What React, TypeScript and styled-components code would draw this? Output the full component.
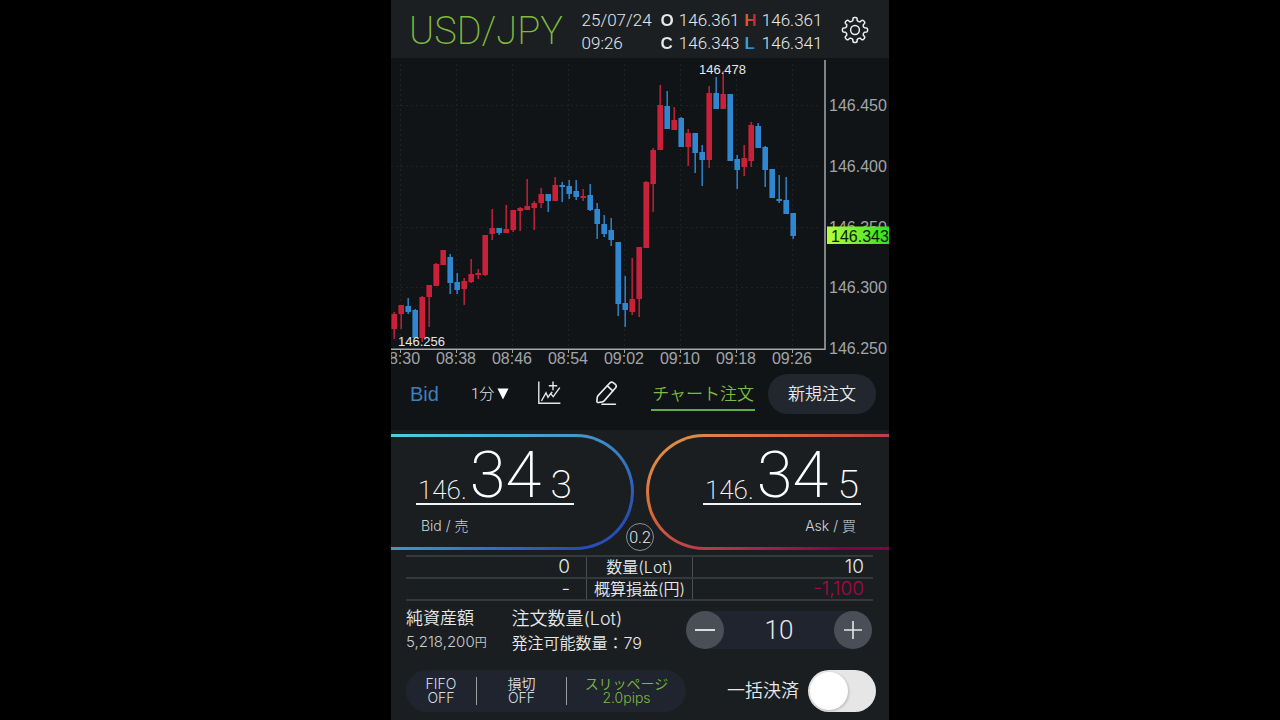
import React, { useState } from 'react';
import styled, { createGlobalStyle } from 'styled-components';

const light = `Roboto, "Noto Sans CJK JP", sans-serif`;
const label = `Inter, "Noto Sans CJK JP", sans-serif`;
const bold = `"Liberation Sans", "Noto Sans CJK JP", sans-serif`;

const GlobalStyle = createGlobalStyle`
  * { box-sizing: border-box; }
  body { margin: 0; background: #000; color: #e6e8ea; font-family: ${light}; font-weight: 300; }
  button, input, select { font: inherit; color: inherit; background: none; border: 0; padding: 0; margin: 0; }
  button { cursor: pointer; }
`;

const Screen = styled.main`
  max-width: 498px;
  min-height: 100vh;
  margin: 0 auto;
  background: #1a1e21;
  overflow: hidden;
`;

const Header = styled.header`
  display: flex;
  align-items: center;
  justify-content: space-between;
  height: 58px;
  padding: 2px 20px 0 18px;
  background: #1b1f22;
`;

const Pair = styled.h1`
  margin: 0;
  padding-top: 2px;
  font-size: 38px;
  line-height: 48px;
  font-weight: 200;
  color: #7fb93f;
`;

const Ohlc = styled.dl`
  display: grid;
  grid-template-columns: repeat(5, auto);
  column-gap: 5px;
  align-items: center;
  margin: 0;
  padding-top: 4px;
  font-size: 17px;
  line-height: 23px;
`;

const Stamp = styled.dd`
  margin: 0 4px 0 0;
`;

const Key = styled.dt<{ $fill?: string }>`
  font-family: ${bold};
  font-weight: 700;
  background: ${(p) => p.$fill ?? '#e6e8ea'};
  background-clip: text;
  color: transparent;
`;

const Price = styled.dd`
  margin: 0;
`;

const IconButton = styled.button`
  display: flex;
  width: 28px;
  svg { display: block; }
`;

const ChartPanel = styled.section`
  background: #111417;
  svg { display: block; width: 100%; height: auto; }
`;

const Toolbar = styled.nav`
  display: flex;
  align-items: center;
  gap: 29px;
  height: 60px;
  padding: 0 13px 12px 19px;
  background: #111417;
`;

const SideButton = styled.button`
  padding-right: 3px;
  font-family: ${bold};
  font-weight: 400;
  font-size: 20px;
  color: #3f7fbe;
`;

const Period = styled.label`
  display: flex;
  align-items: center;
  gap: 2px;
  font-size: 15px;
  select { appearance: none; width: 24px; outline: 0; }
  svg { pointer-events: none; }
`;

const Orders = styled.div`
  display: flex;
  align-items: center;
  gap: 13px;
  margin-left: auto;
`;

const ChartOrder = styled.a`
  padding: 4px 1px 2px;
  border-bottom: 2px solid #5fae45;
  font-size: 17px;
  font-weight: 350;
  line-height: 25px;
  color: #7fb93f;
  white-space: nowrap;
  text-decoration: none;
`;

const NewOrder = styled.button`
  height: 40px;
  padding: 0 20px 3px;
  border-radius: 20px;
  background: #22262f;
  font-size: 17px;
  font-weight: 350;
  white-space: nowrap;
`;

const Quotes = styled.section`
  position: relative;
  display: grid;
  grid-template-columns: 1fr 1fr;
  gap: 12px;
  padding: 4px 0 5px;
`;

const Quote = styled.button<{ $side: 'bid' | 'ask' }>`
  display: flex;
  flex-direction: column;
  align-items: ${(p) => (p.$side === 'bid' ? 'flex-start' : 'flex-end')};
  height: 116px;
  padding: ${(p) => (p.$side === 'bid' ? '0 0 0 25px' : '0 28px 0 0')};
  border: 3px solid transparent;
  border-width: ${(p) => (p.$side === 'bid' ? '3px 3px 3px 0' : '3px 0 3px 3px')};
  border-radius: ${(p) => (p.$side === 'bid' ? '0 58px 58px 0' : '58px 0 0 58px')};
  background:
    linear-gradient(#1a1e21, #1a1e21) padding-box,
    ${(p) =>
      p.$side === 'bid'
        ? 'linear-gradient(150deg, #4fd0dc 0%, #3d8fc9 50%, #2850b4 85%)'
        : 'linear-gradient(150deg, #e08c44 10%, #d66a38 32%, #b23450 62%, #860042 90%)'} border-box;
`;

const Figures = styled.span`
  display: flex;
  align-items: flex-end;
  width: 158px;
  height: 68px;
  padding: 0 2px;
  border-bottom: 2px solid #f2f4f5;
  font-weight: 200;
  color: #fff;
`;

const Whole = styled.span`
  font-size: 26px;
  line-height: 26px;
`;

const Big = styled.span`
  margin-left: 3px;
  font-size: 65px;
  line-height: 55px;
`;

const Pip = styled.span`
  margin-left: auto;
  font-size: 39px;
  line-height: 36px;
`;

const SideLabel = styled.span`
  padding: 0 5px;
  margin-top: 10px;
  font-family: ${label};
  font-size: 14px;
  line-height: 22px;
  color: #d2d5d7;
`;

const Spread = styled.output`
  position: absolute;
  left: 50%;
  bottom: 4px;
  width: 28px;
  height: 28px;
  margin-left: -14px;
  border: 1px solid #8d9194;
  border-radius: 50%;
  background: #1a1e21;
  font-size: 16px;
  line-height: 27px;
  text-align: center;
`;

const Positions = styled.table`
  width: calc(100% - 31px);
  margin-left: 15px;
  border-collapse: collapse;
  table-layout: fixed;
  tr { border-bottom: 2px solid #34393c; }
  tr:first-child { border-top: 2px solid #34393c; }
  td, th { height: 22px; padding: 0; }
`;

const CaptionCol = styled.col`
  width: 107px;
`;

const Amount = styled.td<{ $loss?: boolean; $inset: number }>`
  && { padding-right: ${(p) => p.$inset}px; }
  font-family: ${label};
  font-size: 19px;
  line-height: 20px;
  text-align: right;
  color: ${(p) => (p.$loss ? '#a50a4a' : '#e6e8ea')};
`;

const Caption = styled.th`
  font-size: 16px;
  line-height: 20px;
  font-weight: 350;
  font-family: ${label};
  white-space: nowrap;
  span { display: block; border: 1px solid #4a4f51; border-width: 0 1px; }
`;

const Account = styled.section`
  display: flex;
  align-items: center;
  justify-content: space-between;
  padding: 3px 17px 0 15px;
`;

const Stat = styled.p<{ $wide?: boolean }>`
  margin: 0;
  padding-top: 2px;
  width: ${(p) => (p.$wide ? '150px' : '81px')};
  white-space: nowrap;
  font-family: ${label};
  font-weight: 350;
  font-size: ${(p) => (p.$wide ? 18 : 17)}px;
  line-height: 24px;
`;

const StatSub = styled.span<{ $wide?: boolean }>`
  display: block;
  font-size: ${(p) => (p.$wide ? 16 : 15)}px;
  color: ${(p) => (p.$wide ? '#e6e8ea' : '#c9cccf')};
  small { font-size: 12px; }
`;

const Stepper = styled.div`
  display: flex;
  height: 38px;
  border-radius: 19px;
  background: #20242e;
  input { width: 110px; text-align: center; font-size: 26px; font-weight: 300; outline: 0; }
`;

const Step = styled.button`
  display: flex;
  align-items: center;
  justify-content: center;
  width: 38px;
  border-radius: 50%;
  background: #4a4e57;
`;

const Footer = styled.footer`
  display: flex;
  align-items: center;
  padding: 15px 13px 8px 15px;
`;

const Options = styled.div`
  display: flex;
  align-items: center;
  height: 42px;
  border-radius: 21px;
  background: #20242e;
`;

const Option = styled.button<{ $width: number; $active?: boolean }>`
  width: ${(p) => p.$width}px;
  font-family: ${label};
  font-weight: 350;
  font-size: 14px;
  line-height: 14px;
  white-space: nowrap;
  color: ${(p) => (p.$active ? '#7fb93f' : '#dcdfe1')};
  & + & { border-left: 1px solid #9a9ea2; }
  span { display: block; }
`;

const CloseAll = styled.label`
  display: flex;
  align-items: center;
  gap: 9px;
  margin-left: auto;
  font-size: 18px;
  font-weight: 350;
  line-height: 26px;
`;

const Switch = styled.input`
  appearance: none;
  display: flex;
  align-items: center;
  width: 68px;
  height: 42px;
  && { padding: 2px; }
  border-radius: 21px;
  && { background: #e6e6e6; }
  &::before {
    content: '';
    width: 38px;
    height: 38px;
    border-radius: 50%;
    background: #fff;
    box-shadow: 1px 1px 3px rgba(0, 0, 0, 0.2);
  }
  &:checked { justify-content: flex-end; }
`;

type Dir = 'u' | 'd';
// high, body top, body bottom, low, direction; one candle per minute from 08:29
const candles: [number, number, number, number, Dir][] = [
  [312, 314, 329, 339, 'u'], [305, 305, 314, 329, 'u'], [298, 306, 312, 314, 'd'], [309, 310, 338, 338, 'd'],
  [296, 297, 338, 342, 'u'], [285, 285, 297, 327, 'u'], [263, 264, 286, 286, 'u'], [250, 250, 265, 265, 'u'],
  [254, 257, 283, 294, 'd'], [273, 282, 290, 294, 'd'], [278, 281, 289, 305, 'u'], [259, 274, 282, 283, 'u'],
  [269, 273, 275, 279, 'u'], [235, 235, 275, 276, 'u'], [209, 228, 234, 240, 'u'], [228, 228, 233, 235, 'd'],
  [205, 229, 233, 233, 'u'], [210, 210, 230, 232, 'u'], [207, 208, 211, 231, 'u'], [179, 206, 210, 210, 'u'],
  [201, 203, 208, 230, 'u'], [188, 194, 203, 208, 'u'], [194, 194, 201, 212, 'd'], [177, 185, 201, 201, 'u'],
  [182, 185, 187, 202, 'd'], [180, 186, 194, 199, 'd'], [180, 191, 197, 200, 'd'], [189, 196, 198, 201, 'u'],
  [184, 195, 210, 211, 'd'], [203, 209, 224, 239, 'd'], [215, 224, 234, 237, 'd'], [218, 230, 240, 246, 'd'],
  [242, 242, 304, 316, 'd'], [276, 303, 310, 327, 'd'], [258, 299, 312, 315, 'u'], [247, 247, 299, 317, 'u'],
  [181, 182, 248, 248, 'u'], [148, 150, 184, 212, 'u'], [85, 105, 150, 150, 'u'], [91, 106, 129, 129, 'd'],
  [107, 120, 130, 130, 'u'], [117, 118, 147, 147, 'd'], [129, 133, 147, 166, 'u'], [133, 133, 153, 173, 'd'],
  [145, 152, 160, 186, 'd'], [86, 93, 160, 168, 'u'], [77, 93, 109, 109, 'd'], [71, 94, 109, 109, 'u'],
  [94, 94, 161, 161, 'd'], [155, 159, 170, 189, 'd'], [145, 158, 167, 176, 'u'], [122, 125, 161, 167, 'u'],
  [123, 126, 148, 148, 'd'], [146, 147, 170, 187, 'd'], [169, 169, 198, 198, 'd'], [175, 199, 201, 203, 'd'],
  [177, 200, 214, 214, 'd'], [213, 213, 236, 239, 'd'],
];

const times = ['08:30', '08:38', '08:46', '08:54', '09:02', '09:10', '09:18', '09:26'];
const levels: [string, number][] = [
  ['146.450', 105], ['146.400', 166], ['146.350', 227], ['146.300', 287], ['146.250', 348],
];

const Chart = () => (
  <svg viewBox="0 58 498 312" role="img" aria-label="USD/JPY 1分足" fontFamily="Liberation Sans, sans-serif" fontWeight="400">
    <defs>
      <linearGradient id="last" x1="0" x2="1">
        <stop offset="0" stopColor="#b4ff3e" />
        <stop offset="1" stopColor="#35df22" />
      </linearGradient>
    </defs>
    <g stroke="#1d2225" strokeDasharray="2 3">
      {times.map((t, i) => <line key={t} x1={9.5 + i * 56} x2={9.5 + i * 56} y1="64" y2="348" />)}
      {levels.slice(0, 4).map(([l, y]) => <line key={l} x1="0" x2="430" y1={y + 0.5} y2={y + 0.5} />)}
    </g>
    {candles.map(([high, top, bottom, low, dir], i) => (
      <g key={i} fill={dir === 'u' ? '#c9213a' : '#3187cf'}>
        <rect x={2.4 + i * 7} y={high} width="1.6" height={low - high} opacity="0.9" />
        <rect x={0.4 + i * 7} y={top} width="5.6" height={bottom - top} />
      </g>
    ))}
    <path d="M0 349.2H434M434 60V350" stroke="#a5a8aa" strokeWidth="1.5" fill="none" />
    <g fontSize="16" fill="#a2a5a7">
      {times.map((t, i) => (
        <g key={t}>
          <path d={`M${9.5 + i * 56} 349v4`} stroke="#a5a8aa" />
          <text x={9 + i * 56} y="364" textAnchor="middle">{t}</text>
        </g>
      ))}
      {levels.map(([l, y]) => <text key={l} x="438" y={y + 6}>{l}</text>)}
    </g>
    <g fontSize="13" fill="#e4e6e7">
      <text x="308" y="74">146.478</text>
      <text x="7" y="346">146.256</text>
    </g>
    <rect x="436" y="226.5" width="62" height="17.5" fill="url(#last)" />
    <text x="440" y="242" fontSize="16" fill="#0d1a08">146.343</text>
  </svg>
);

const gearPath = (() => {
  const pts: string[] = [];
  const n = 8;
  for (let i = 0; i < n; i++) {
    const a = (i * 2 * Math.PI) / n - Math.PI / 2;
    const at = (r: number, d: number) => `${(14 + r * Math.cos(a + d)).toFixed(2)} ${(14 + r * Math.sin(a + d)).toFixed(2)}`;
    pts.push(`${i ? 'L' : 'M'}${at(9.8, -0.22)}L${at(11.6, -0.18)}Q${at(12.6, -0.16)} ${at(12.6, -0.05)}L${at(12.6, 0.05)}Q${at(12.6, 0.16)} ${at(11.6, 0.18)}L${at(9.8, 0.22)}Q${at(8.4, 0.39)} ${at(9.8, 0.56)}`);
  }
  return `${pts.join('')}Z`;
})();

const Gear = () => (
  <svg width="28" height="28" viewBox="0 0 28 28" fill="none" stroke="#eceeef" strokeWidth="1.5" strokeLinejoin="round">
    <path d={gearPath} />
    <circle cx="14" cy="14" r="4.4" />
  </svg>
);

const ChartPlus = () => (
  <svg width="24" height="26" viewBox="0 0 24 26" fill="none" stroke="#e4e6e7" strokeWidth="1.4">
    <path d="M0.8 0.5V22.2H22.4" />
    <path d="M3.4 20L8 11.8L10 16.4L12.6 12.6L15.2 15.6L21.8 6.6M12.2 13.6L14.2 10.8" />
    <path d="M15 0.6V9.2M10.8 4.8H19.2" />
  </svg>
);

const Pencil = () => (
  <svg width="24" height="26" viewBox="0 0 24 26" fill="none" stroke="#eceeef" strokeWidth="1.6" strokeLinejoin="round" strokeLinecap="round">
    <path d="M14.8 2Q16.4 0.4 18.2 1.6L20.4 3.4Q22 5 20.6 6.8L9.4 19.6Q8.4 20.6 7.2 20.9L3.8 21.5Q1.7 21.8 1.9 19.8L2.3 16.2Q2.5 15.2 3.3 14.4Z" />
    <path d="M12.4 4.8L17.8 9.8M7 23.2H20.4" />
  </svg>
);

export default function App() {
  const [lots, setLots] = useState(10);
  return (
    <>
      <GlobalStyle />
      <Screen>
        <Header>
          <Pair>USD/JPY</Pair>
          <Ohlc>
            <Stamp>25/07/24</Stamp>
            <Key>O</Key><Price>146.361</Price>
            <Key $fill="linear-gradient(90deg, #e2602e, #c01c3c)">H</Key><Price>146.361</Price>
            <Stamp>09:26</Stamp>
            <Key>C</Key><Price>146.343</Price>
            <Key $fill="linear-gradient(90deg, #35a8dc, #2a6fc4)">L</Key><Price>146.341</Price>
          </Ohlc>
          <IconButton aria-label="設定"><Gear /></IconButton>
        </Header>
        <ChartPanel><Chart /></ChartPanel>
        <Toolbar>
          <SideButton>Bid</SideButton>
          <Period>
            <select aria-label="足種"><option>1分</option></select>
            <svg width="12" height="12" viewBox="0 0 12 12"><path d="M0.5 0.5H11.5L6 11.5Z" fill="#fff" /></svg>
          </Period>
          <IconButton aria-label="テクニカル"><ChartPlus /></IconButton>
          <IconButton aria-label="描画"><Pencil /></IconButton>
          <Orders>
            <ChartOrder href="#chart-order">チャート注文</ChartOrder>
            <NewOrder>新規注文</NewOrder>
          </Orders>
        </Toolbar>
        <Quotes>
          <Quote $side="bid">
            <Figures><Whole>146.</Whole><Big>34</Big><Pip>3</Pip></Figures>
            <SideLabel>Bid / 売</SideLabel>
          </Quote>
          <Quote $side="ask">
            <Figures><Whole>146.</Whole><Big>34</Big><Pip>5</Pip></Figures>
            <SideLabel>Ask / 買</SideLabel>
          </Quote>
          <Spread>0.2</Spread>
        </Quotes>
        <Positions>
          <colgroup><col /><CaptionCol /><col /></colgroup>
          <tbody>
            <tr><Amount $inset={16}>0</Amount><Caption scope="row"><span>数量(Lot)</span></Caption><Amount $inset={9}>10</Amount></tr>
            <tr><Amount $inset={16}>-</Amount><Caption scope="row"><span>概算損益(円)</span></Caption><Amount $inset={9} $loss>-1,100</Amount></tr>
          </tbody>
        </Positions>
        <Account>
          <Stat>純資産額<StatSub>5,218,200<small>円</small></StatSub></Stat>
          <Stat $wide>注文数量(Lot)<StatSub $wide>発注可能数量：79</StatSub></Stat>
          <Stepper>
            <Step aria-label="減らす" onClick={() => setLots(Math.max(0, lots - 1))}>
              <svg width="20" height="20"><path d="M0 10H20" stroke="#fff" strokeWidth="1.6" /></svg>
            </Step>
            <input aria-label="注文数量" value={lots} onChange={(e) => setLots(Number(e.target.value) || 0)} />
            <Step aria-label="増やす" onClick={() => setLots(lots + 1)}>
              <svg width="20" height="20"><path d="M1 10H19M10 1V19" stroke="#e4e6e8" strokeWidth="1.6" /></svg>
            </Step>
          </Stepper>
        </Account>
        <Footer>
          <Options>
            <Option $width={70}><span>FIFO</span><span>OFF</span></Option>
            <Option $width={90}><span>損切</span><span>OFF</span></Option>
            <Option $width={120} $active><span>スリッページ</span><span>2.0pips</span></Option>
          </Options>
          <CloseAll>一括決済<Switch type="checkbox" /></CloseAll>
        </Footer>
      </Screen>
    </>
  );
}
